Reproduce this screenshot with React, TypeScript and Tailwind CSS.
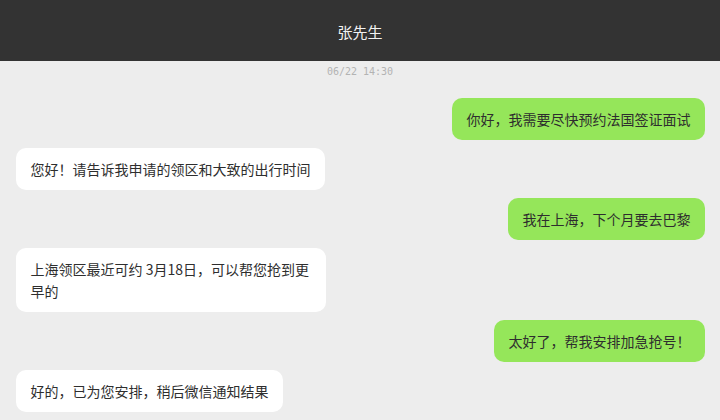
import React from "react";

type Msg = { from: "me" | "them"; text: string };

const messages: Msg[] = [
  { from: "me", text: "你好，我需要尽快预约法国签证面试" },
  { from: "them", text: "您好！请告诉我申请的领区和大致的出行时间" },
  { from: "me", text: "我在上海，下个月要去巴黎" },
  { from: "them", text: "上海领区最近可约 3月18日，可以帮您抢到更早的" },
  { from: "me", text: "太好了，帮我安排加急抢号！" },
  { from: "them", text: "好的，已为您安排，稍后微信通知结果" },
];

const cjk = { fontFamily: '"Noto Sans CJK SC", "Noto Sans", sans-serif' };

export default function App() {
  return (
    <div className="w-[720px] h-[420px] overflow-hidden bg-[#ededed] flex flex-col" style={cjk}>
      <header className="h-[61px] shrink-0 bg-[#333333] flex items-center justify-center">
        <span className="text-[15px] text-[#f2f2f2] pt-[4px]">张先生</span>
      </header>
      <div
        className="pt-[4px] text-center text-[10px] leading-[14px] text-[#b3b3b3]"
        style={{ fontFamily: '"DejaVu Sans Mono", monospace' }}
      >
        06/22 14:30
      </div>
      <div className="mt-[19px] pl-[16px] pr-[15px] flex flex-col gap-[8px]">
        {messages.map((m, i) => (
          <div key={i} className={m.from === "me" ? "flex justify-end" : "flex justify-start"}>
            <div
              className={
                (m.from === "me" ? "bg-[#95e65a]" : "bg-white") +
                " max-w-[310px] rounded-[10px] px-[14.5px] py-[10px] text-[14px] leading-[22px] text-[#2e2e2e]"
              }
            >
              {m.text}
            </div>
          </div>
        ))}
      </div>
    </div>
  );
}
